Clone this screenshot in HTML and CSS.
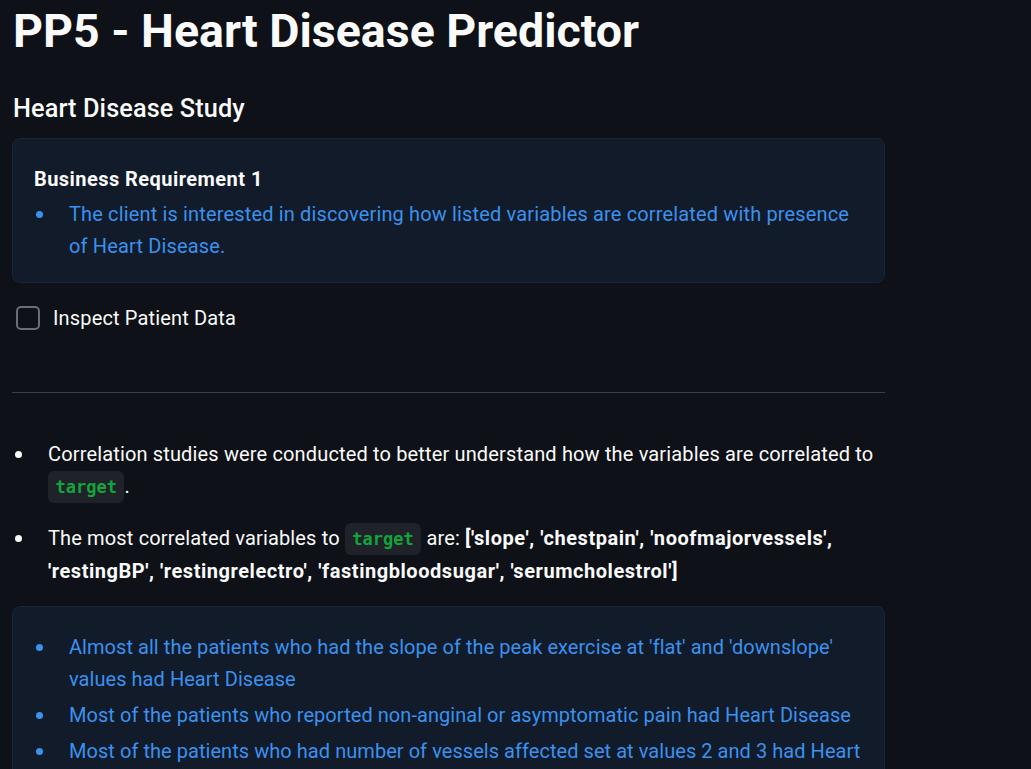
FILE: index.html
```html
<!DOCTYPE html>
<html lang="en">
<head>
<meta charset="utf-8">
<title>PP5 - Heart Disease Predictor</title>
<link rel="stylesheet" href="styles.css">
</head>
<body>
<main class="page">
  <h1 class="title">PP5 - Heart Disease Predictor</h1>
  <h2 class="subtitle">Heart Disease Study</h2>

  <div class="alert">
    <p class="alert-head">Business Requirement 1</p>
    <ul class="list alert-list">
      <li>The client is interested in discovering how listed variables are correlated with presence of Heart Disease.</li>
    </ul>
  </div>

  <label class="check">
    <span class="check-box"></span>
    <span class="check-label">Inspect Patient Data</span>
  </label>

  <hr class="rule">

  <ul class="list main-list">
    <li>Correlation studies were conducted to better understand how the variables are correlated to <code class="code">target</code>.</li>
    <li>The most correlated variables to <code class="code">target</code> are: <strong class="vars">['slope', 'chestpain', 'noofmajorvessels', 'restingBP', 'restingrelectro', 'fastingbloodsugar', 'serumcholestrol']</strong></li>
  </ul>

  <div class="alert alert-2">
    <ul class="list alert-list">
      <li>Almost all the patients who had the slope of the peak exercise at 'flat' and 'downslope' values had Heart Disease</li>
      <li>Most of the patients who reported non-anginal or asymptomatic pain had Heart Disease</li>
      <li>Most of the patients who had number of vessels affected set at values 2 and 3 had Heart Disease</li>
    </ul>
  </div>
</main>
</body>
</html>
```

FILE: styles.css
```css
html, body {
  margin: 0;
  padding: 0;
  background: #0e1117;
  color: #fafafa;
  font-family: Roboto, "Liberation Sans", sans-serif;
  font-size: 20px;
  letter-spacing: 0.15px;
  overflow: hidden;
}

.page {
  width: 873px;
  padding: 3px 0 0 12px;
}

.title {
  margin: 0;
  font-size: 46.5px;
  font-weight: 700;
  line-height: 56px;
  letter-spacing: 0;
  padding-left: 1px;
}

.subtitle {
  margin: 34px 0 0 0;
  font-size: 25.3px;
  font-weight: 500;
  line-height: 32px;
  letter-spacing: 0.1px;
  padding-left: 1px;
}

.alert {
  margin-top: 13px;
  background: #111b2a;
  border: 1px solid #16263b;
  border-radius: 8px;
  padding: 24px 20px 20px 21px;
  color: #3b91ee;
}

.alert-head {
  margin: 0 0 3px 0;
  color: #fafafa;
  font-weight: 700;
  font-size: 20px;
  letter-spacing: 0.45px;
  line-height: 32px;
}

.list {
  list-style: none;
  margin: 0;
  line-height: 32px;
}

.list li {
  position: relative;
}

.list li::before {
  content: "";
  position: absolute;
  left: -33px;
  top: 13px;
  width: 7px;
  height: 7px;
  border-radius: 50%;
  background: currentColor;
}

.alert-list {
  padding-left: 35px;
}

.alert-list li + li {
  margin-top: 4px;
}

.check {
  display: flex;
  align-items: center;
  gap: 13px;
  margin-top: 19px;
  padding-left: 4px;
  line-height: 32px;
}

.check-box {
  width: 20px;
  height: 20px;
  border: 2px solid #6b6e75;
  border-radius: 5px;
}

.rule {
  margin: 58px 0 0 0;
  border: 0;
  border-top: 1px solid #3b3e45;
}

.main-list {
  margin-top: 45px;
  padding-left: 36px;
}

.main-list li + li {
  margin-top: 19px;
}

.code {
  font-family: "DejaVu Sans Mono", monospace;
  font-size: 17px;
  font-weight: 700;
  letter-spacing: 0;
  color: #12a53b;
  background: #1f2229;
  border-radius: 6px;
  padding: 6px 7.5px;
}

.vars {
  letter-spacing: 0.55px;
}

.alert-2 {
  margin-top: 19px;
  padding-top: 24px;
}

.alert-2 .alert-list {
  letter-spacing: 0.05px;
}
```
